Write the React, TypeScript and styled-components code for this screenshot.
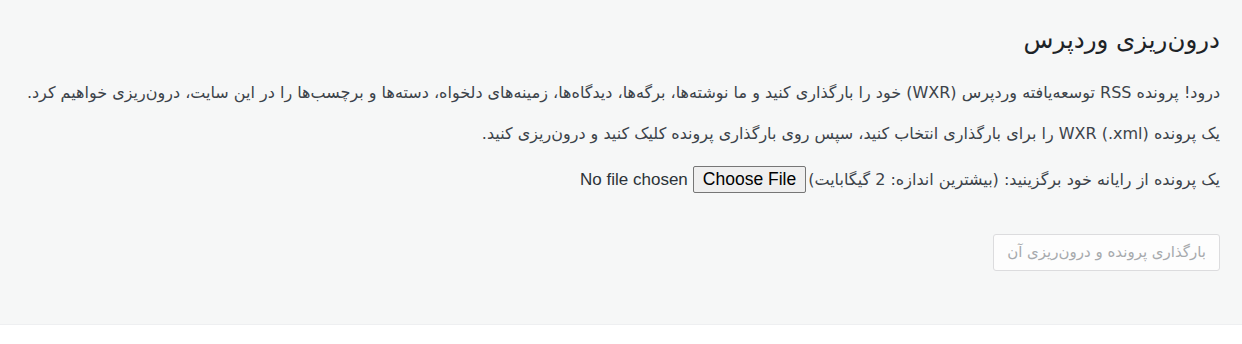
import React from 'react'
import styled, { createGlobalStyle } from 'styled-components'

const GlobalStyle = createGlobalStyle`
  html, body {
    margin: 0;
    padding: 0;
    background: #fff;
  }
`

export default function App() {
  return (
    <>
      <GlobalStyle />
      <Wrap dir="rtl">
        <Title>درون‌ریزی وردپرس</Title>
        <Text>
          درود! پرونده RSS توسعه‌یافته وردپرس (WXR) خود را بارگذاری کنید و ما نوشته‌ها، برگه‌ها، دیدگاه‌ها، زمینه‌های دلخواه، دسته‌ها و برچسب‌ها را در این سایت، درون‌ریزی خواهیم کرد.
        </Text>
        <Text>
          یک پرونده <span dir="ltr">WXR (.xml)</span> را برای بارگذاری انتخاب کنید، سپس روی بارگذاری پرونده کلیک کنید و درون‌ریزی کنید.
        </Text>
        <FileRow>
          <label htmlFor="upload">یک پرونده از رایانه خود برگزینید: (بیشترین اندازه: 2 گیگابایت)</label>
          <FileInput type="file" id="upload" name="import" />
        </FileRow>
        <Submit>
          <UploadButton type="submit" disabled>
            بارگذاری پرونده و درون‌ریزی آن
          </UploadButton>
        </Submit>
      </Wrap>
    </>
  )
}

const Wrap = styled.div`
  background: #f6f7f7;
  height: 325px;
  box-sizing: border-box;
  padding: 0 22px 0 20px;
  font-family: 'DejaVu Sans', Tahoma, sans-serif;
  color: #3c434a;
  border-bottom: 1px solid #eeeff1;
  overflow: hidden;
`

const Title = styled.h1`
  margin: 0;
  padding: 24px 0 8px;
  font-size: 24.5px;
  font-weight: 400;
  line-height: 32px;
  color: #1d2327;
`

const Text = styled.p`
  margin: 16px 0;
  font-size: 16px;
  line-height: 25px;
`

const FileRow = styled.p`
  margin: 16px 0 0;
  min-height: 34px;
  font-size: 16px;
  line-height: 25px;
  display: flex;
  align-items: center;

  label {
    margin-left: 2px;
  }
`

const FileInput = styled.input`
  font-family: 'Liberation Sans', Arial, sans-serif;
  font-size: 17px;
  color: #2c3338;

  &::file-selector-button {
    font-family: 'Liberation Sans', Arial, sans-serif;
    font-size: 17.5px;
    height: 27px;
    padding: 0 9px;
    margin: 0 0 0 5px;
    color: #000;
    background: #efefef;
    border: 1px solid #767676;
    border-radius: 2px;
  }
`

const Submit = styled.div`
  margin-top: 38px;
`

const UploadButton = styled.button`
  font-family: 'DejaVu Sans', Tahoma, sans-serif;
  font-size: 15px;
  line-height: 35px;
  height: 37px;
  padding: 0 13px;
  background: #fdfdfd;
  color: #a7aaad;
  border: 1px solid #dcdcde;
  border-radius: 3px;
  cursor: default;
`
